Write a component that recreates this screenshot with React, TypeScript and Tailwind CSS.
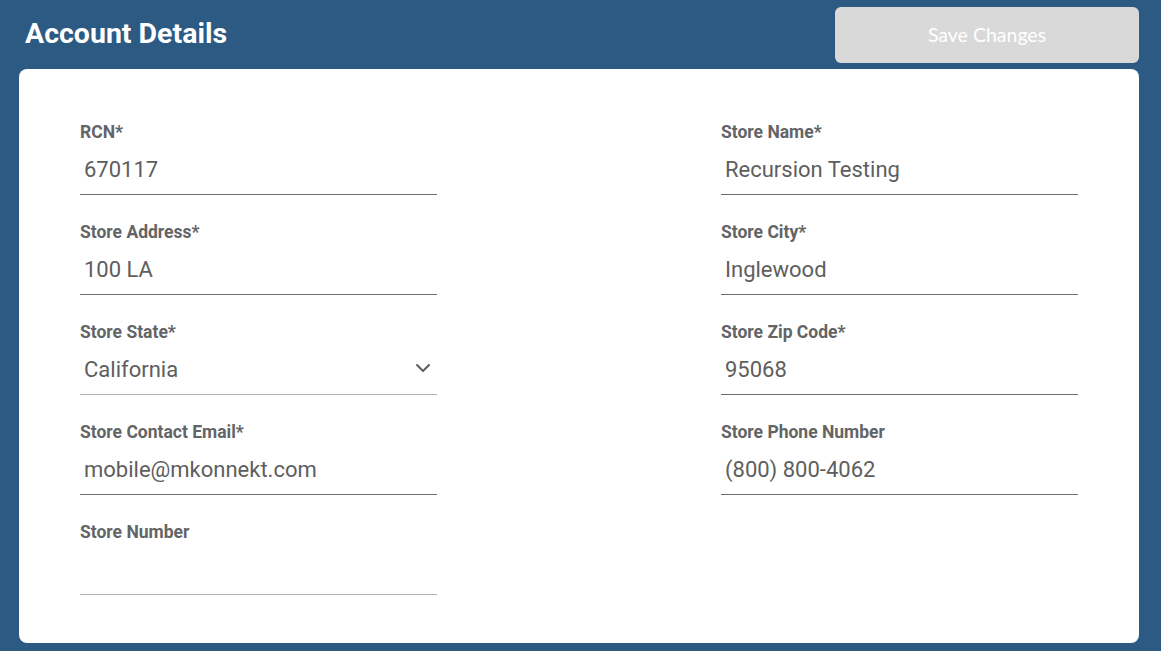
import { ChevronDown } from 'lucide-react'

type Field = {
  label: string
  value: string
  select?: boolean
  light?: boolean
}

const left: Field[] = [
  { label: 'RCN*', value: '670117' },
  { label: 'Store Address*', value: '100 LA' },
  { label: 'Store State*', value: 'California', select: true, light: true },
  { label: 'Store Contact Email*', value: 'mobile@mkonnekt.com' },
  { label: 'Store Number', value: '', light: true },
]

const right: Field[] = [
  { label: 'Store Name*', value: 'Recursion Testing' },
  { label: 'Store City*', value: 'Inglewood' },
  { label: 'Store Zip Code*', value: '95068' },
  { label: 'Store Phone Number', value: '(800) 800-4062' },
]

function FormField({ field }: { field: Field }) {
  return (
    <div className="h-[100px]">
      <div className="text-[17.5px] font-bold leading-[22px] text-[#636466]">{field.label}</div>
      <div
        className={`flex items-center justify-between border-b-[1.5px] pb-[10px] pl-[4px] pr-[2px] pt-[13px] ${
          field.light ? 'border-[#b4b4b4]' : 'border-[#6e6e6e]'
        }`}
      >
        <span className="h-[28px] text-[22px] leading-[28px] text-[#5e5e5e]">{field.value}</span>
        {field.select && (
          <ChevronDown className="mb-[4px] h-[24px] w-[24px] text-[#5f5f5f]" strokeWidth={2} />
        )}
      </div>
    </div>
  )
}

export default function App() {
  return (
    <div className="flex h-[651px] w-full flex-col bg-[#2c5a82] pb-[8px] pl-[19px] pr-[22px] pt-[7px] font-['Roboto',sans-serif]">
      <header className="flex h-[62px] items-start justify-between">
        <h1 className="ml-[6px] mt-[13px] text-[28.5px] font-bold leading-[28.5px] text-white">Account Details</h1>
        <button className="h-[56px] w-[304px] rounded-[6px] bg-[#d9d9d9] font-['Lato',sans-serif] text-[19.5px] text-white">
          Save Changes
        </button>
      </header>
      <main className="flex-1 rounded-[8px] bg-white px-[61px] pt-[52px]">
        <div className="grid grid-cols-[357px_357px] justify-between">
          <div className="flex flex-col">
            {left.map((f) => (
              <FormField key={f.label} field={f} />
            ))}
          </div>
          <div className="flex flex-col">
            {right.map((f) => (
              <FormField key={f.label} field={f} />
            ))}
          </div>
        </div>
      </main>
    </div>
  )
}
